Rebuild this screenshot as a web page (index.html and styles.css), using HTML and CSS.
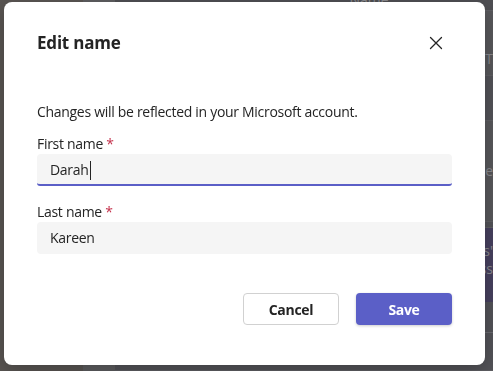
FILE: index.html
```html
<!DOCTYPE html>
<html lang="en">
<head>
  <meta charset="UTF-8" />
  <meta name="viewport" content="width=device-width, initial-scale=1.0" />
  <title>Edit name</title>
  <link rel="stylesheet" href="styles.css">
</head>
<body>
  <div class="app">
    <div class="rail"></div>
    <div class="side"></div>
    <div class="main">
      <div class="row row-top"><span class="bg-text name-head">Name</span></div>
      <div class="row row-a"><span class="bg-text">Display "T</span></div>
      <div class="row row-b"></div>
      <div class="row row-c"><span class="bg-text">Pronoun e</span></div>
      <div class="row row-d"></div>
      <div class="row row-banner"><span class="bg-text">Updates'<br>across</span></div>
      <div class="row row-e"></div>
    </div>
  </div>

  <div class="overlay">
    <div class="dialog">
      <div class="dialog-header">
        <div class="dialog-title">Edit name</div>
        <button class="close-btn" aria-label="Close">
          <svg width="14" height="14" viewBox="0 0 14 14"><path d="M1.5 1.5 L12.5 12.5 M12.5 1.5 L1.5 12.5" stroke="#242424" stroke-width="1.3" fill="none" stroke-linecap="round"/></svg>
        </button>
      </div>
      <div class="dialog-desc">Changes will be reflected in your Microsoft account.</div>
      <div class="field-label first">First name <span class="req">*</span></div>
      <div class="field focused">Darah<span class="caret"></span></div>
      <div class="field-label second">Last name <span class="req">*</span></div>
      <div class="field">Kareen</div>
      <div class="actions">
        <button class="btn btn-cancel">Cancel</button>
        <button class="btn btn-save">Save</button>
      </div>
    </div>
  </div>
</body>
</html>
```

FILE: styles.css
```css
body {
  margin: 0;
  padding: 0;
  font-family: "Open Sans", "Noto Sans", sans-serif;
  color: #242424;
  background: #515156;
  overflow: hidden;
}
.app {
  display: grid;
  grid-template-columns: 83px 32px 1fr;
  height: 100vh;
}
.rail {
  background: #5a5653;
}
.side {
  background: #5e5e60;
}
.main {
  background: #535358;
  display: flex;
  flex-direction: column;
}
.row {
  border-bottom: 1px solid #5f5f63;
  color: #8a8a8e;
  font-size: 14px;
  overflow: hidden;
  white-space: nowrap;
  display: flex;
  justify-content: flex-end;
  padding-right: 0;
}
.row-top { height: 10px; background: #4f4f53; justify-content: center; padding-left: 130px; }
.name-head { display: block; margin-top: -10px; }
.row-a { height: 64px; background: #58585b; line-height: 96px; }
.row-b { height: 44px; }
.row-c { height: 100px; background: #58585b; line-height: 100px; }
.row-d { height: 5px; }
.row-banner {
  height: 74px;
  background: #47415f;
  border-bottom: none;
  padding-top: 14px;
  box-sizing: border-box;
  line-height: 18px;
  text-align: right;
}
.row-e { flex: 1; border-top: 1px solid #6a6a70; margin-top: 30px; }

.overlay {
  position: fixed;
  left: 4px;
  top: 2px;
}
.dialog {
  width: 481px;
  height: 363px;
  box-sizing: border-box;
  background: #fff;
  border-radius: 8px;
  padding: 28px 33px 40px 33px;
  box-shadow: 0 6px 20px rgba(0,0,0,0.25);
  letter-spacing: -0.3px;
}
.dialog-header {
  display: flex;
  align-items: center;
  justify-content: space-between;
  height: 26px;
}
.dialog-title {
  font-size: 17px;
  font-weight: 700;
  line-height: 26px;
  letter-spacing: -0.2px;
}
.close-btn {
  border: none;
  background: none;
  padding: 0;
  width: 20px;
  height: 20px;
  display: flex;
  align-items: center;
  justify-content: center;
  margin-right: 6px;
}
.dialog-desc {
  margin-top: 46px;
  font-size: 14px;
  line-height: 20px;
}
.field-label {
  font-size: 14px;
  line-height: 20px;
}
.field-label.first { margin-top: 12px; }
.field-label.second { margin-top: 16px; }
.req {
  color: #c4314b;
}
.field {
  height: 32px;
  box-sizing: border-box;
  background: #f5f5f5;
  border-radius: 4px;
  padding: 0 13px;
  font-size: 14px;
  line-height: 32px;
  display: flex;
  align-items: center;
}
.field.focused {
  border-bottom: 2px solid #5b5fc7;
  border-radius: 4px 4px 3px 3px;
  padding-top: 2px;
}
.caret {
  display: inline-block;
  width: 1px;
  height: 19px;
  background: #242424;
  margin-left: 1px;
}
.actions {
  margin-top: 39px;
  display: flex;
  justify-content: flex-end;
  gap: 17px;
}
.btn {
  width: 96px;
  height: 32px;
  border-radius: 4px;
  font-family: "Open Sans", "Noto Sans", sans-serif;
  font-size: 14px;
  font-weight: 700;
  letter-spacing: -0.3px;
  cursor: pointer;
}
.btn-cancel {
  background: #fff;
  border: 1px solid #d1d1d1;
  color: #242424;
}
.btn-save {
  background: #5b5fc7;
  border: none;
  color: #fff;
  box-shadow: 0 1px 3px rgba(0,0,0,0.2);
}
```
